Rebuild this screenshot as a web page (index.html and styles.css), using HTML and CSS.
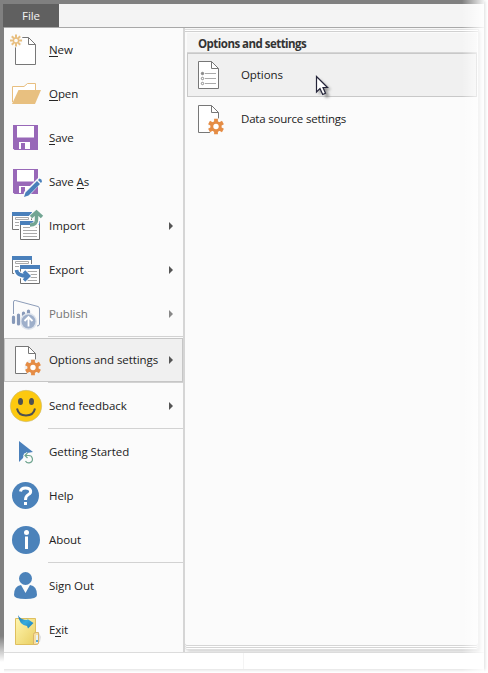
FILE: index.html
```html
<!DOCTYPE html>
<html lang="en">
<head>
<meta charset="utf-8">
<title>File menu</title>
<link rel="stylesheet" href="styles.css">
</head>
<body>
<svg class="defs" aria-hidden="true">
  <symbol id="gear" viewBox="-8 -8 16 16">
    <g fill="#e58c45">
      <circle r="5.600"/>
      <path d="M-1.900-8H1.900V8H-1.900Z"/><path d="M-1.900-8H1.900V8H-1.900Z" transform="rotate(60)"/><path d="M-1.900-8H1.900V8H-1.900Z" transform="rotate(120)"/>
    </g>
    <circle r="2.700" fill="#fff"/>
  </symbol>
  <symbol id="page" viewBox="0 0 32 32">
    <path d="M5.500 2.500H18.500L25.500 9.500V29.500H5.500Z" fill="#fff" stroke="#777"/>
    <path d="M18.500 2.500V9.500H25.500" fill="none" stroke="#777"/>
  </symbol>
  <symbol id="floppy" viewBox="0 0 32 32">
    <path d="M3 3H28V28H4.500L3 26.500Z" fill="#9868b8"/>
    <path d="M7 4H24V15.500H7ZM9 20H20V27H9Z" fill="#fff"/>
    <path d="M11 21H15V27H11Z" fill="#9868b8"/>
  </symbol>
  <symbol id="sheets" viewBox="0 0 32 32">
    <path d="M2.500 2.500H21.500V19.500H2.500Z" fill="#fff" stroke="#777"/>
    <path d="M2 2H22V6H2Z" fill="#4a80bb"/>
    <path d="M5.500 7.500H18.500V9.500H5.500ZM5 12.500H10M5 15.500H10" fill="none" stroke="#aaa"/>
    <path d="M9 10H31V31H9Z" fill="#fbfbfb"/>
    <path d="M10.500 11.500H29.500V29.500H10.500Z" fill="#fff" stroke="#707070"/>
    <path d="M10 11H30V15H10Z" fill="#4a80bb"/>
    <path d="M13 17.500H27M13 20.500H27M13 23.500H27M13 26.500H27" stroke="#aaa"/>
  </symbol>
</svg>

<div class="window">
  <header class="ribbon"><div class="tab">File</div></header>
  <div class="content">
    <nav class="menu">
      <div class="item">
        <svg class="icon" viewBox="0 0 32 32"><g transform="translate(0 1)"><use href="#page" width="32" height="32"/></g><circle cx="6" cy="6.500" r="7" fill="#fbfbfb"/><path d="M6 .5V4M6 9V12.500M0 6.500H3.500M8.500 6.500H12M1.800 2.300L4 4.500M8 8.500L10.200 10.700M10.200 2.300L8 4.500M4 8.500L1.800 10.700" stroke="#e8bf80" stroke-width="2"/><circle cx="6" cy="6.500" r="2.500" fill="none" stroke="#e8bf80" stroke-width="1.300"/></svg>
        <span><u>N</u>ew</span>
      </div>
      <div class="item">
        <svg class="icon" viewBox="0 0 32 32"><path d="M2.500 24V8.500H14L17.500 5.500H25.500V13" fill="#fff" stroke="#e8bf80"/><path d="M8.500 12H31L25 26H2Z" fill="#e8c080"/></svg>
        <span><u>O</u>pen</span>
      </div>
      <div class="item">
        <svg class="icon" viewBox="0 0 32 32"><use href="#floppy" width="32" height="32"/></svg>
        <span><u>S</u>ave</span>
      </div>
      <div class="item">
        <svg class="icon" viewBox="0 0 32 32"><use href="#floppy" width="32" height="32"/><path d="M13 31L14 26L28 12L33 15L19 30Z" fill="#fbfbfb"/><path d="M14 31L15.500 26.500L27 15L30 18L18.500 29.500ZM28 14L29.500 12.500Q32 13 32 15.500L31 17Z" fill="#4a80bb"/></svg>
        <span>Save <u>A</u>s</span>
      </div>
      <div class="item">
        <svg class="icon" viewBox="0 0 32 32"><use href="#sheets" width="32" height="32"/><path d="M20 16Q27 16 26.500 10V3M21 8L26.500 2L32 8" fill="none" stroke="#fbfbfb" stroke-width="6"/><path d="M20 15Q27 15 26.500 9V3M21 7L26.500 2L32 7" fill="none" stroke="#72a593" stroke-width="3.500"/></svg>
        <span>Import</span><i class="arrow"></i>
      </div>
      <div class="item">
        <svg class="icon" viewBox="0 0 32 32"><use href="#sheets" width="32" height="32"/><path d="M6 15Q6 22 17 22M13 17L18 22L13 27" fill="none" stroke="#fff" stroke-width="6"/><path d="M6.500 16Q7 22 18 22M14 17.500L18.500 22L14 26.500" fill="none" stroke="#4a80bb" stroke-width="3.500"/></svg>
        <span>Export</span><i class="arrow"></i>
      </div>
      <div class="item disabled">
        <svg class="icon" viewBox="0 0 32 32"><path d="M3.500 16V4Q3.500 2 5.500 2.500L28 8.500Q29.500 9 29.500 11V26Q29.500 28 27 28" fill="none" stroke="#8c9cb8"/><path d="M3.500 19V24.500M8.500 17V26M13.500 15V18M18.500 13V16" stroke="#8799b9" stroke-width="3.200" stroke-linecap="round"/><circle cx="18.500" cy="23.500" r="8.500" fill="#dde3ec"/><circle cx="18.500" cy="23.500" r="7" fill="#9eafca"/><path d="M18.500 28.500V19.500M14.500 23L18.500 19L22.500 23" fill="none" stroke="#fff" stroke-width="1.800"/></svg>
        <span>Publish</span><i class="arrow"></i>
      </div>
      <hr>
      <div class="item selected">
        <svg class="icon" viewBox="0 0 32 32"><use href="#page" width="32" height="32"/><circle cx="23" cy="23.500" r="8.500" fill="#f0f0f0"/><use href="#gear" x="15" y="15.500" width="16" height="16"/></svg>
        <span>Options and settings</span><i class="arrow"></i>
      </div>
      <hr>
      <div class="item">
        <svg class="icon" viewBox="0 0 32 32"><circle cx="16" cy="16" r="15.700" fill="#fdc90f" stroke="#c8b878" stroke-width=".6"/><ellipse cx="10.500" cy="11.500" rx="2.500" ry="3.500" fill="#4e5051"/><ellipse cx="21.500" cy="11.500" rx="2.500" ry="3.500" fill="#4e5051"/><path d="M7 18.500Q8.500 25.500 16 25.500T25 18.500" fill="none" stroke="#4e5051" stroke-width="2"/></svg>
        <span>Send feedback</span><i class="arrow"></i>
      </div>
      <hr>
      <div class="item">
        <svg class="icon" viewBox="0 0 32 32"><path d="M9 5L23 16L14 17.500L13 22L9 26Z" fill="#4a80bb"/><path d="M15.500 19.500H18.500A3.700 3.700 0 1 1 15.500 25M17.500 17L15 19.500L17.500 22" fill="none" stroke="#fbfbfb" stroke-width="2.500"/><path d="M15.500 19.500H18.500A3.700 3.700 0 1 1 15.500 25M17.500 17L15 19.500L17.500 22" fill="none" stroke="#6fa48f" stroke-width="1.200"/></svg>
        <span>Getting Started</span>
      </div>
      <div class="item">
        <svg class="icon" viewBox="0 0 32 32"><circle cx="15.500" cy="15.500" r="13.500" fill="#4b82ba"/><path d="M10.500 11.500Q11 8 15.500 8C22 8 21.500 13 18.500 14.500Q15.500 16 15.500 20" fill="none" stroke="#fff" stroke-width="3"/><path d="M14 22H17V25H14Z" fill="#fff"/></svg>
        <span>Help</span>
      </div>
      <div class="item">
        <svg class="icon" viewBox="0 0 32 32"><circle cx="16" cy="16" r="14" fill="#4b82ba"/><circle cx="16.500" cy="8.500" r="2.500" fill="#fff"/><path d="M15 12.500H18V25H15Z" fill="#fff"/></svg>
        <span>About</span>
      </div>
      <hr>
      <div class="item">
        <svg class="icon" viewBox="0 0 32 32"><circle cx="15.500" cy="8.500" r="6.500" fill="#4b82ba"/><path d="M4 25Q4 16 11 15L15.500 23L20 15Q27 16 27 25Q27 29 15.500 29T4 25Z" fill="#4b82ba"/></svg>
        <span>Sign Out</span>
      </div>
      <div class="item">
        <svg class="icon" viewBox="0 0 32 32"><defs><linearGradient id="note" x2="1" y2="1"><stop stop-color="#fff6b0"/><stop offset="1" stop-color="#e9ce61"/></linearGradient><linearGradient id="exit" x2="1" y2="1"><stop stop-color="#1b6fae"/><stop offset=".5" stop-color="#36acdf"/><stop offset="1" stop-color="#1b78b5"/></linearGradient></defs><path d="M26 29L29 27V19L31 23L30 28Z" fill="#ddd"/><path d="M5.500 4.500H25.500V30.500H5.500Z" fill="url(#note)" stroke="#dfbf5e"/><path d="M23.500 20.500Q23.500 18.500 26 18.500H28.500V29Q28.500 30.500 26 30.500H23.500Z" fill="#f7dfa0" stroke="#d8b56d"/><path d="M26 21H28V29H26Z" fill="#e8f3f8"/><path d="M26 26H28V28H26Z" fill="#55a9de"/><path d="M8 1Q10 6 18 6L16 4L23.500 9L18 14.500L17 12Q9 11 8 1Z" fill="url(#exit)"/></svg>
        <span>E<u>x</u>it</span>
      </div>
    </nav>
    <section class="panel">
      <h1>Options and settings</h1>
      <div class="option active">
        <svg class="icon" viewBox="0 0 32 32"><use href="#page" width="32" height="32"/><path d="M12 14.500H23M12 19.500H23M12 24.500H23" stroke="#aaa"/><g fill="#fff" stroke="#888"><circle cx="9.500" cy="14.500" r="1.200" fill="#888"/><circle cx="9.500" cy="19.500" r="1.200"/><circle cx="9.500" cy="24.500" r="1.200"/></g></svg>
        <span>Options</span>
      </div>
      <div class="option">
        <svg class="icon" viewBox="0 0 32 32"><use href="#page" width="32" height="32"/><circle cx="23" cy="23.500" r="8.500" fill="#fbfbfb"/><use href="#gear" x="15" y="15.500" width="16" height="16"/></svg>
        <span class="tight">Data source settings</span>
      </div>
    </section>
  </div>
  <footer class="status"><div></div></footer>
</div>
<div class="fade-right"></div>
<div class="fade-left"></div>
<svg class="cursor" viewBox="0 0 20 26"><path d="M4 4V20L8 16L11 23L14.500 21.500L11.500 15H16Z" fill="#555" class="cursor-shadow"/><path d="M1.500 1.500V17L5 13.500L7.700 19.500L10.500 18.300L8 12.500H12.500Z" fill="#fff" stroke="#25253a" stroke-width="1.200"/></svg>
</body>
</html>
```

FILE: styles.css
```css
* { box-sizing: border-box; }

body {
  margin: 0;
  height: 673px;
  overflow: hidden;
  position: relative;
  background: #fff;
  color: #222;
  font: 11.5px/16px "Open Sans", "Noto Sans", sans-serif;
  letter-spacing: -.08px;
}

.defs { position: absolute; width: 0; height: 0; }

.window {
  display: flex;
  flex-direction: column;
  width: 484px;
  height: 669px;
  padding: 4px 0 0 4px;
  background: #808080;
  box-shadow: 1px 1px 3px #ddd;
}

.ribbon {
  height: 24px;
  background: #f4f4f4;
  border-bottom: 1px solid #a8a8a8;
}

.tab {
  width: 56px;
  height: 23px;
  margin-left: -1px;
  background: #606060;
  color: #f4f4f4;
  line-height: 24px;
  text-align: center;
}

.content { display: flex; height: 624px; background: #f8f8f8; }

.menu {
  width: 181px;
  background: #fbfbfb;
  border-right: 2px solid #d5d5d5;
}

.item {
  display: flex;
  align-items: center;
  height: 44px;
  padding-left: 6px;
}

.icon { width: 32px; height: 32px; flex: none; overflow: visible; }
.item span { margin-left: 7px; white-space: nowrap; }
u { text-decoration: none; border-bottom: 1px solid #262626; display: inline-block; line-height: 12px; }

.arrow {
  margin: 0 10px 0 auto;
  border: 4px solid transparent;
  border-left-color: #555;
  border-right: 0;
}

.disabled { color: #757575; }
.disabled .arrow { border-left-color: #888; }

.selected { background: #f0f0f0; box-shadow: inset 0 0 0 1px #c6c6c6; }

hr {
  height: 2px;
  margin: 0 0 0 44px;
  border: 0;
  border-top: 1px solid #d2d2d2;
}

.panel {
  width: 294px;
  height: 621px;
  margin-top: 1px;
  padding: 3px 1px 0 2px;
  background: #fbfbfb;
  border: 1px solid #dedede;
  border-width: 1px 1px 1px 0;
  border-radius: 0 0 3px 3px;
  box-shadow: inset 0 1px #fff, inset 0 2px #d0d0d0, inset 0 -1px #fff, inset 0 -2px #d5d5d5, inset 0 -3px #fff, inset 0 -4px #d5d5d5, 2px 2px 3px #d8d8d8;
}

h1 {
  height: 20px;
  margin: 0;
  padding-left: 11px;
  background: #f4f4f4;
  border-bottom: 1px solid #d5d5d5;
  font-size: 11.5px;
  line-height: 21px;
  letter-spacing: -.53px;
  color: #333;
}

.option {
  display: flex;
  align-items: center;
  height: 44px;
  padding-left: 6px;
}

.option span { margin-left: 16px; }
.tight { letter-spacing: -.2px; }
.active { background: #f0f0f0; border: 1px solid #c8c8c8; padding-left: 5px; }

.status { height: 17px; border-top: 1px solid #dcdcdc; background: #fff; }
.status div { width: 240px; height: 16px; border-right: 1px solid #f4f4f4; }

.fade-right {
  position: absolute;
  top: 0;
  right: 4px;
  width: 22px;
  height: 673px;
  background: linear-gradient(90deg, transparent, rgba(255, 255, 255, .9));
}

.fade-left {
  position: absolute;
  top: 636px;
  left: 0;
  width: 4px;
  height: 37px;
  background: linear-gradient(transparent, #fff 26px);
}

.cursor { position: absolute; left: 315px; top: 75px; width: 20px; height: 26px; overflow: visible; }
.cursor-shadow { opacity: .6; filter: blur(1.5px); }
```
